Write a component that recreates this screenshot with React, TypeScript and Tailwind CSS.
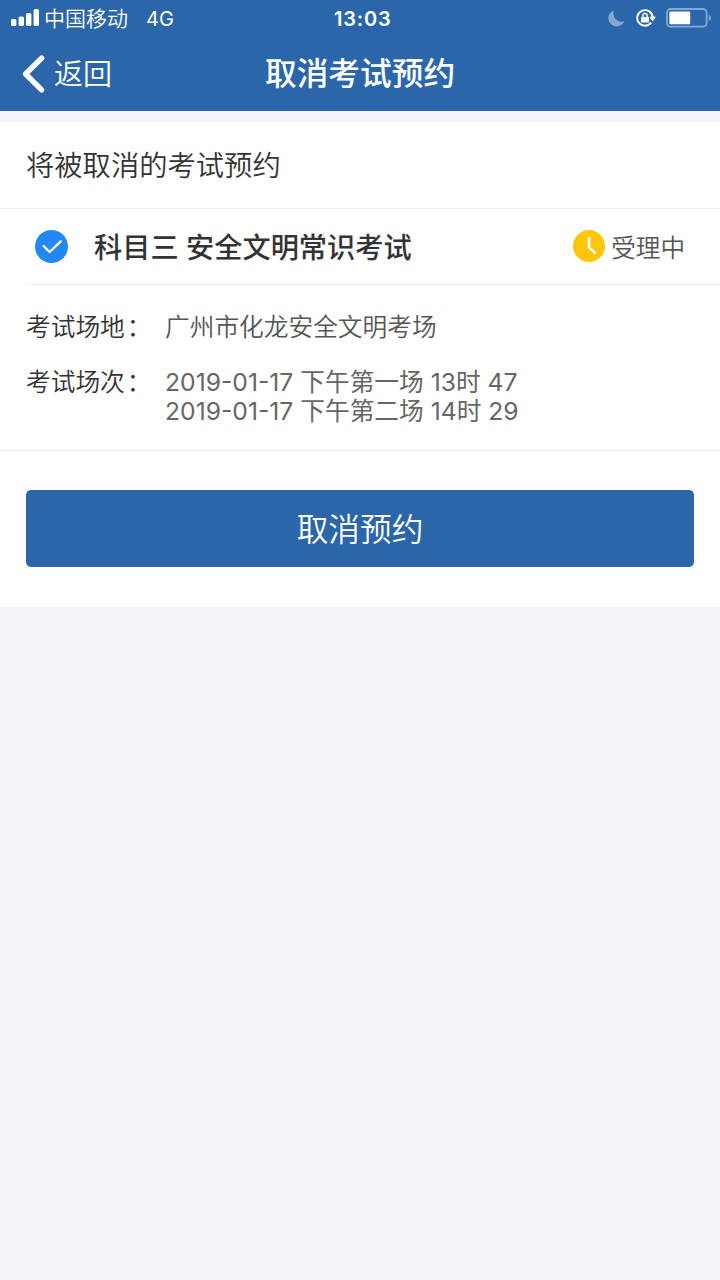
import React from "react";

const BOOKING = {
  subject: "科目三 安全文明常识考试",
  status: "受理中",
  place: "广州市化龙安全文明考场",
  sessions: ["2019-01-17 下午第一场 13时 47", "2019-01-17 下午第二场 14时 29"],
};

function SignalIcon() {
  return (
    <svg width="28" height="18" viewBox="0 0 28 18" fill="#fff">
      <rect x="0" y="10" width="5.4" height="7" rx="1.6" />
      <rect x="7.6" y="7.4" width="5.4" height="9.6" rx="1.6" />
      <rect x="15" y="4" width="5.4" height="13" rx="1.6" />
      <rect x="22.6" y="0" width="5.4" height="17" rx="1.6" />
    </svg>
  );
}

function MoonIcon() {
  return (
    <svg width="17" height="17" viewBox="0 0 17 17" fill="#84a8d2">
      <path d="M5.6.6A8.2 8.2 0 1 0 16.2 11.2C10 13.4 4 8 5.6.6Z" />
    </svg>
  );
}

function RotationLockIcon() {
  return (
    <svg width="20" height="18" viewBox="0 0 20 18" fill="none">
      <path d="M15.2 13.7A7.8 7.8 0 1 1 16.8 8.4" stroke="#fff" strokeWidth="1.9" />
      <path d="M13.2 7.8h6.8l-3.4 4.4Z" fill="#fff" />
      <rect x="5" y="7.9" width="8" height="5.6" rx=".7" fill="#fff" />
      <path d="M6.9 8.4V6.6a2.1 2.1 0 0 1 4.2 0v1.8" stroke="#fff" strokeWidth="1.4" />
    </svg>
  );
}

function BatteryIcon() {
  return (
    <svg width="46" height="20" viewBox="0 0 46 20" fill="none">
      <rect x="1" y="1" width="39.6" height="17.6" rx="3.6" stroke="#84a8d2" strokeWidth="1.8" />
      <rect x="3.4" y="3.4" width="20.8" height="12.8" rx="1.2" fill="#fff" />
      <path d="M42.8 6.4c3 1.6 3 5.2 0 6.8Z" fill="#84a8d2" />
    </svg>
  );
}

function StatusBar() {
  return (
    <div className="flex h-9 items-center justify-between pl-[11px] pr-2 leading-9">
      <div className="flex w-[300px] items-center">
        <SignalIcon />
        <span className="ml-[5px] pt-px text-[21px] font-[350]">中国移动</span>
        <span className="ml-[18px] pt-px text-[20px]">4G</span>
      </div>
      <span className="mr-auto ml-[23px] pt-px text-[20px] font-semibold tracking-[0.8px]">13:03</span>
      <div className="flex items-center">
        <MoonIcon />
        <span className="ml-[11px]">
          <RotationLockIcon />
        </span>
        <span className="ml-[10px]">
          <BatteryIcon />
        </span>
      </div>
    </div>
  );
}

function NavBar() {
  return (
    <div className="grid h-[75px] grid-cols-3 items-center">
      <button className="flex items-center pl-[22px] text-[29px] font-[350] leading-none">
        <svg width="23" height="38" viewBox="0 0 23 38" fill="none">
          <path d="M19.6 3.2 3.6 19l16 15.8" stroke="#fff" strokeWidth="5.4" strokeLinecap="round" strokeLinejoin="round" />
        </svg>
        <span className="ml-[9px] pt-0.5">返回</span>
      </button>
      <h1 className="whitespace-nowrap text-center text-[31.7px] font-medium leading-none">取消考试预约</h1>
    </div>
  );
}

export default function App() {
  return (
    <div className="min-h-[1280px] w-[720px] bg-[#f3f3f8] font-['Inter','Noto_Sans_CJK_SC',sans-serif] text-[#333]">
      <header className="h-[111px] bg-[#2c66aa] text-white">
        <StatusBar />
        <NavBar />
      </header>

      <main className="mt-[11px] bg-white">
        <h2 className="h-[87px] border-b border-[#ececee] pl-[26px] text-[28.3px] font-[350] leading-[89px]">将被取消的考试预约</h2>

        <section className="border-b border-[#ececee]">
          <div className="ml-[26px] flex h-[76px] items-center border-b border-[#ececee] pl-[9px] pr-[35px]">
            {/* selected marker */}
            <svg width="33" height="33" viewBox="0 0 33 33" fill="none">
              <circle cx="16.5" cy="16.5" r="16.5" fill="#2387f4" />
              <path d="m8.6 16 6 6 11.2-10.6" stroke="#fff" strokeWidth="2.3" strokeLinecap="round" strokeLinejoin="round" />
            </svg>
            <span className="ml-[26px] pt-1 text-[28.2px] font-medium">{BOOKING.subject}</span>
            <div className="ml-auto flex items-center text-[24.6px] font-[350] text-[#555]">
              <svg width="32" height="32" viewBox="0 0 32 32" fill="none">
                <circle cx="16" cy="16" r="16" fill="#fdc50b" />
                <path d="M16 7v10.2l6.6 6.4" stroke="#fff" strokeWidth="2.6" strokeLinejoin="round" />
              </svg>
              <span className="ml-[6px] pt-[3px]">{BOOKING.status}</span>
            </div>
          </div>

          <dl className="grid h-[165px] grid-cols-[139px_1fr] content-start gap-y-[26px] pl-[26px] pt-[28px] text-[24.7px] font-[350] leading-[29px]">
            <dt>
              考试场地<span className="ml-0.5">：</span>
            </dt>
            <dd className="text-[#555]">{BOOKING.place}</dd>
            <dt>
              考试场次<span className="ml-0.5">：</span>
            </dt>
            <dd className="font-normal text-[#666]">
              {BOOKING.sessions.map((s) => (
                <p key={s}>{s}</p>
              ))}
            </dd>
          </dl>
        </section>

        <div className="px-[26px] pb-10 pt-[39px]">
          <button className="h-[77px] w-full rounded-[5px] bg-[#2c66aa] pt-0.5 text-[31.7px] font-[350] text-white">
            取消预约
          </button>
        </div>
      </main>
    </div>
  );
}
